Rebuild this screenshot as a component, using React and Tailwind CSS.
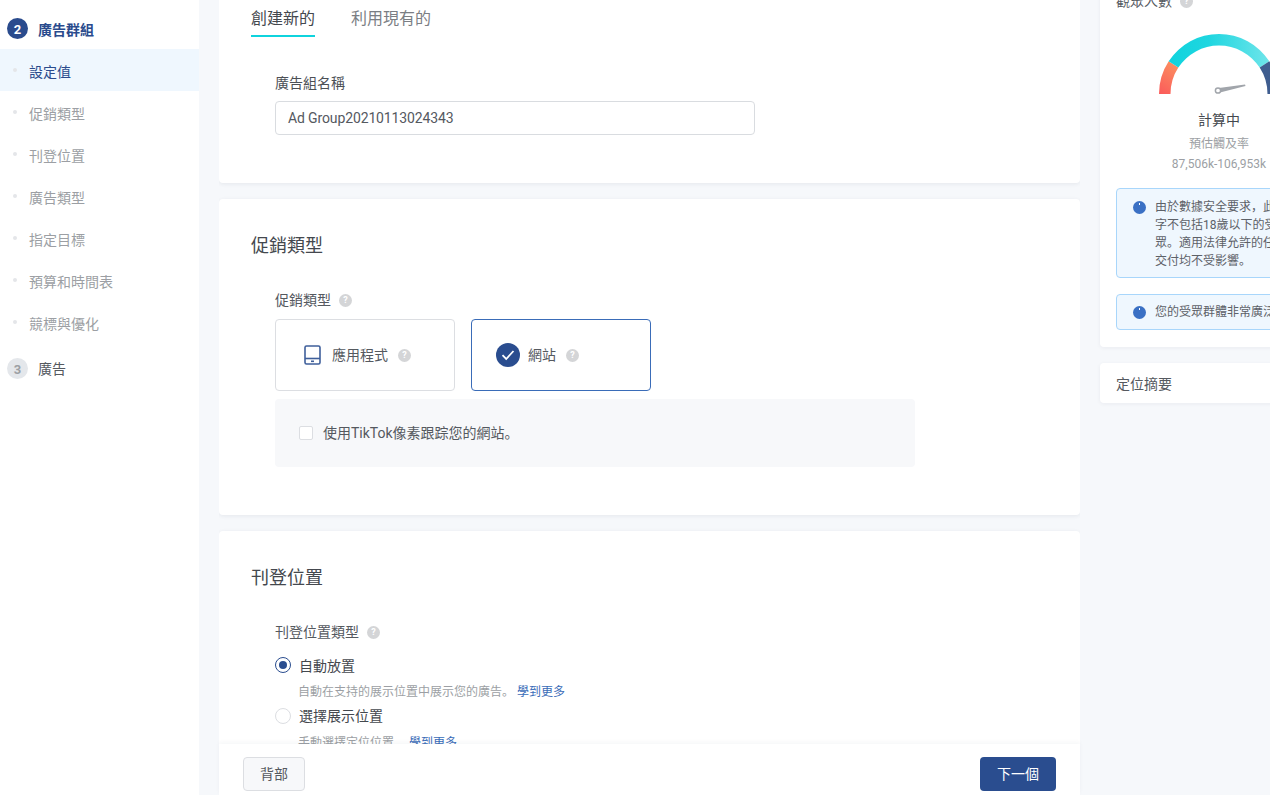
const FONT = "font-['Roboto','Noto_Sans_CJK_SC',sans-serif]";

function Help({ className = "" }) {
  return (
    <span className={`inline-flex h-[13px] w-[13px] shrink-0 items-center justify-center rounded-full bg-[#d4d5d7] text-[9px] font-bold leading-none text-white ${className}`}>?</span>
  );
}

function SubItem({ label, active }) {
  return (
    <div className={`flex h-[42px] items-center ${active ? "bg-[#eff7fe] text-[#2a4b8d]" : "text-[#9c9fa4]"}`}>
      <span className="ml-[13px] h-[4px] w-[4px] rounded-full bg-[#e4e6e9]" />
      <span className="ml-[12px] pt-[4px] text-[14px]">{label}</span>
    </div>
  );
}

function Gauge() {
  const cx = 60, cy = 64;
  const pt = (r, deg) => {
    const a = (deg * Math.PI) / 180;
    return `${cx + r * Math.cos(a)} ${cy - r * Math.sin(a)}`;
  };
  const seg = (from, to) => `M${pt(60, from)}A60 60 0 0 1 ${pt(60, to)}L${pt(48.5, to)}A48.5 48.5 0 0 0 ${pt(48.5, from)}Z`;
  return (
    <svg width="121" height="66" viewBox="0 0 121 66" className="block">
      <defs>
        <linearGradient id="gaugeRed" x1="0" y1="1" x2="0.4" y2="0">
          <stop offset="0" stopColor="#fb5a5a" />
          <stop offset="1" stopColor="#fb8a60" />
        </linearGradient>
        <linearGradient id="gaugeTeal" x1="0" y1="0" x2="1" y2="0">
          <stop offset="0" stopColor="#0fd3dd" />
          <stop offset="0.4" stopColor="#1fd6e0" />
          <stop offset="1" stopColor="#6fe5ea" />
        </linearGradient>
      </defs>
      <path d={seg(180, 147)} fill="url(#gaugeRed)" />
      <path d={seg(147, 33)} fill="url(#gaugeTeal)" />
      <path d={seg(33, 0)} fill="#3f5d8f" />
      <path d="M58 58.2 86 54.6 L86.5 56 60 62.8Z" fill="#a1a5ab" />
      <circle cx="59" cy="60.5" r="2.6" fill="#fff" stroke="#a1a5ab" strokeWidth="1.5" />
    </svg>
  );
}

function Notice({ lines, pad }) {
  return (
    <div className={`flex w-[260px] gap-[9px] rounded-[4px] border border-[#a8d6fb] bg-[#eff7fe] pl-[16px] text-[12px] leading-[18px] text-[#5d6168] ${pad}`}>
      <span className="relative mt-[3px] h-[13px] w-[13px] shrink-0 rounded-full bg-[#3a70c4]">
        <span className="absolute left-[6px] top-[2px] h-[2px] w-[1px] bg-white" />
      </span>
      <div className="whitespace-nowrap">
        {lines.map((l) => (
          <div key={l}>{l}</div>
        ))}
      </div>
    </div>
  );
}

export default function App() {
  return (
    <div className={`flex h-[795px] w-[1270px] overflow-hidden bg-[#f6f8fb] ${FONT}`}>
      {/* Sidebar */}
      <aside className="w-[199px] shrink-0 bg-white pt-[18px]">
        <div className="flex h-[21px] items-center pl-[7px]">
          <span className="flex h-[21px] w-[21px] items-end justify-center rounded-full bg-[#2a4b8d] text-[13px] font-bold leading-[18px] text-white">2</span>
          <span className="ml-[10px] pt-[4px] text-[14px] font-bold text-[#2a4b8d]">廣告群組</span>
        </div>
        <div className="mt-[10px]">
          <SubItem label="設定值" active />
          <SubItem label="促銷類型" />
          <SubItem label="刊登位置" />
          <SubItem label="廣告類型" />
          <SubItem label="指定目標" />
          <SubItem label="預算和時間表" />
          <SubItem label="競標與優化" />
        </div>
        <div className="mt-[15px] flex h-[21px] items-center pl-[7px]">
          <span className="flex h-[21px] w-[21px] items-end justify-center rounded-full bg-[#e4e7eb] text-[13px] font-bold leading-[18px] text-[#9c9fa4]">3</span>
          <span className="ml-[10px] pt-[2px] text-[14px] text-[#55595f]">廣告</span>
        </div>
      </aside>

      {/* Main column */}
      <main className="relative ml-[20px] h-[795px] w-[861px] shrink-0">
        <div className="h-[795px] overflow-hidden">
          <section className="h-[183px] rounded-b-[4px] bg-white shadow-[0_1px_4px_rgba(30,40,70,0.08)]">
            <div className="ml-[32px] flex gap-[36px] text-[16px] leading-[24px]">
              <div className="flex h-[37px] flex-col justify-end border-b-2 border-[#0fd3dd] pb-[4px] text-[#44484e]">創建新的</div>
              <div className="flex h-[37px] flex-col justify-end border-b-2 border-transparent pb-[4px] text-[#7b7e84]">利用現有的</div>
            </div>
            <div className="ml-[56px] mt-[36px] text-[14px] leading-[20px] text-[#4c5056]">廣告組名稱</div>
            <div className="ml-[56px] mt-[8px] flex h-[34px] w-[480px] items-center rounded-[4px] border border-[#d9dce0] pl-[12px] text-[14px] tracking-[-0.13px] text-[#55595f]">Ad Group20210113024343</div>
          </section>

          <section className="mt-[16px] h-[316px] rounded-[4px] bg-white px-[32px] pt-[34px] shadow-[0_1px_4px_rgba(30,40,70,0.08)]">
            <h2 className="text-[18px] font-normal leading-[26px] text-[#44484e]">促銷類型</h2>
            <div className="ml-[24px] mt-[31px] flex h-[20px] items-center gap-[8px] text-[14px] text-[#55595f]">
              促銷類型 <Help />
            </div>
            <div className="ml-[24px] mt-[9px] flex gap-[16px]">
              <div className="flex h-[72px] w-[180px] items-center rounded-[4px] border border-[#dcdee2] pl-[28px]">
                <svg width="17" height="20" viewBox="0 0 17 20" fill="none">
                  <rect x="1" y="1" width="15" height="18" rx="1.5" stroke="#3f5f9b" strokeWidth="1.6" />
                  <path d="M1 13.5h15" stroke="#3f5f9b" strokeWidth="1.6" />
                  <rect x="7" y="15.5" width="3" height="1.6" fill="#3f5f9b" />
                </svg>
                <span className="ml-[11px] text-[14px] text-[#55595f]">應用程式</span>
                <Help className="ml-[10px]" />
              </div>
              <div className="flex h-[72px] w-[180px] items-center rounded-[4px] border border-[#3a6cb8] pl-[24px]">
                <span className="flex h-[24px] w-[24px] items-center justify-center rounded-full bg-[#2a4d8f]">
                  <svg width="14" height="12" viewBox="0 0 14 12" fill="none">
                    <path d="M1.5 6.2 5.2 10 12.5 2" stroke="#fff" strokeWidth="1.8" />
                  </svg>
                </span>
                <span className="ml-[8px] text-[14px] text-[#55595f]">網站</span>
                <Help className="ml-[10px]" />
              </div>
            </div>
            <div className="ml-[24px] mt-[8px] flex h-[68px] w-[640px] items-center rounded-[4px] bg-[#f7f8fa] pl-[24px]">
              <span className="h-[14px] w-[14px] rounded-[2px] border border-[#dcdee2] bg-white" />
              <span className="ml-[10px] text-[14px] text-[#55595f]">使用TikTok像素跟踪您的網站。</span>
            </div>
          </section>

          <section className="mt-[16px] h-[300px] rounded-[4px] bg-white px-[32px] pt-[34px] shadow-[0_1px_4px_rgba(30,40,70,0.08)]">
            <h2 className="text-[18px] font-normal leading-[26px] text-[#44484e]">刊登位置</h2>
            <div className="ml-[24px] mt-[31px] flex h-[20px] items-center gap-[8px] text-[14px] text-[#55595f]">
              刊登位置類型 <Help />
            </div>
            <div className="ml-[24px] mt-[13px] flex h-[20px] items-center gap-[8px] text-[14px] text-[#44484e]">
              <span className="flex h-[16px] w-[16px] items-center justify-center rounded-full border border-[#2a4d8f]">
                <span className="h-[8px] w-[8px] rounded-full bg-[#2a4d8f]" />
              </span>
              <span className="pt-[2px]">自動放置</span>
            </div>
            <div className="ml-[47px] mt-[9px] h-[16px] text-[12px] leading-[16px] text-[#9c9fa4]">
              自動在支持的展示位置中展示您的廣告。 <span className="text-[#3a6cb8]">學到更多</span>
            </div>
            <div className="ml-[24px] mt-[6px] flex h-[20px] items-center gap-[8px] text-[14px] text-[#44484e]">
              <span className="h-[16px] w-[16px] rounded-full border border-[#dcdee2]" />
              <span>選擇展示位置</span>
            </div>
            <div className="ml-[47px] mt-[9px] h-[16px] text-[12px] leading-[16px] text-[#9c9fa4]">
              手動選擇定位位置。 <span className="text-[#3a6cb8]">學到更多</span>
            </div>
          </section>
        </div>

        <div className="absolute bottom-0 left-0 right-0 flex h-[51px] items-start justify-between bg-white px-[24px] pt-[13px] shadow-[0_-2px_4px_rgba(30,40,70,0.04)]">
          <button className="h-[34px] w-[62px] rounded-[4px] border border-[#dcdee2] bg-[#f7f8fa] text-[14px] text-[#55595f]">背部</button>
          <button className="h-[34px] w-[76px] rounded-[4px] bg-[#2a4d8f] text-[14px] text-white">下一個</button>
        </div>
      </main>

      {/* Right column */}
      <div className="-mt-[20px] ml-[20px] w-[260px] shrink-0">
        <section className="h-[367px] rounded-[4px] bg-white pl-[16px] pt-[11px] shadow-[0_1px_4px_rgba(30,40,70,0.06)]">
          <div className="flex h-[20px] items-center gap-[8px] text-[14px] text-[#55595f]">
            觀眾人數 <Help />
          </div>
          <div className="ml-[43px] mt-[19px]">
            <Gauge />
          </div>
          <div className="w-[206px] text-center">
            <div className="mt-[14px] text-[14px] leading-[20px] text-[#44484e]">計算中</div>
            <div className="mt-[5px] text-[12px] leading-[18px] text-[#9c9fa4]">預估觸及率</div>
            <div className="mt-[2px] text-[12px] leading-[18px] text-[#9c9fa4]">87,506k-106,953k</div>
          </div>
          <div className="mt-[15px] flex flex-col gap-[16px]">
            <Notice pad="pt-[9px] pb-[7px]" lines={["由於數據安全要求，此數", "字不包括18歲以下的受", "眾。適用法律允許的任", "交付均不受影響。"]} />
            <Notice pad="py-[8px]" lines={["您的受眾群體非常廣泛"]} />
          </div>
        </section>
        <section className="mt-[16px] flex h-[40px] items-center rounded-[4px] bg-white pl-[16px] text-[14px] text-[#55595f] shadow-[0_1px_4px_rgba(30,40,70,0.06)]">
          <span className="pt-[2px]">定位摘要</span>
        </section>
      </div>
    </div>
  );
}
